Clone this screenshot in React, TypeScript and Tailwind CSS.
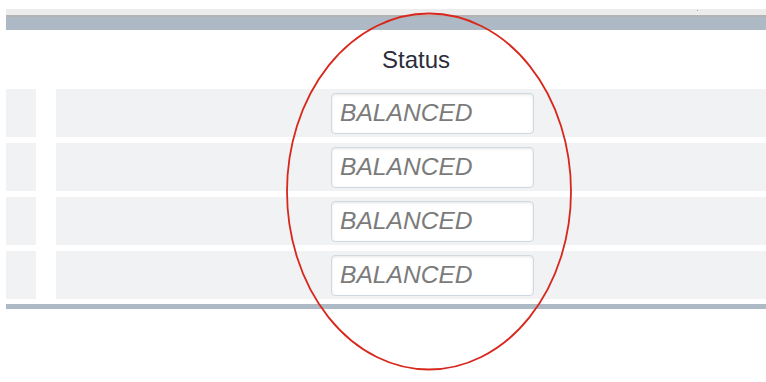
import React from "react";

function Row() {
  return (
    <div className="flex h-[48px] gap-[20px]">
      <div className="w-[30px] bg-[#f0f2f4]" />
      <div className="flex flex-1 items-center bg-[#f0f2f4] pl-[275px]">
        <div className="flex h-[41px] w-[203px] items-center rounded-[4px] border border-[#d0d8e0] bg-white pl-[8px] shadow-[inset_0_1px_3px_rgba(0,0,0,0.10)]">
          <span className="text-[24.6px] italic leading-none text-[#7b7b7b]" style={{ fontFamily: '"Liberation Sans", Arial, sans-serif' }}>
            BALANCED
          </span>
        </div>
      </div>
    </div>
  );
}

export default function App() {
  return (
    <div className="relative h-[382px] w-[766px] overflow-hidden bg-white" style={{ fontFamily: '"Liberation Sans", Arial, sans-serif' }}>
      <div className="h-[9px]" />
      <div className="ml-[6px] flex flex-col">
        <div className="relative h-[6px] bg-[#ececec]">
          <div className="absolute left-[691px] top-[1px] h-[1px] w-[1px] bg-[#999]" />
        </div>
        <div className="h-[2px] bg-[#b3b3b3]" />
        <div className="h-[13px] bg-[#adbac5]" />
        <div className="flex h-[59px] items-start pl-[376px] pt-[16px]">
          <span className="text-[24px] leading-[28px] text-[#2b2d3a]">Status</span>
        </div>
        <div className="flex flex-col gap-[6px]">
          <Row />
          <Row />
          <Row />
          <Row />
        </div>
        <div className="mt-[5px] h-[5px] bg-[#adbac5]" />
      </div>
      <svg className="pointer-events-none absolute left-0 top-0" width="766" height="382">
        <ellipse cx="429" cy="191.5" rx="142" ry="178" fill="none" stroke="#d8281c" strokeWidth="1.8" />
      </svg>
    </div>
  );
}
